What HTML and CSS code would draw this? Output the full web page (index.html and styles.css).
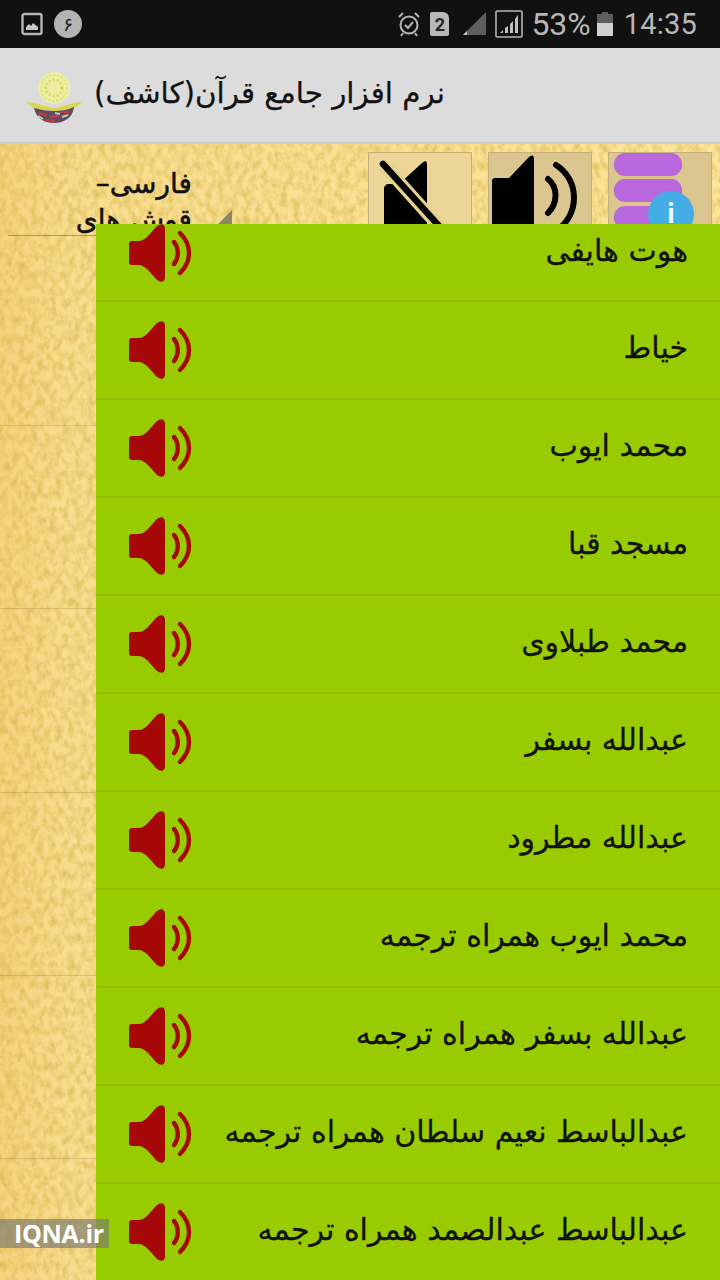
FILE: index.html
```html
<!DOCTYPE html>
<html lang="fa">
<head>
<meta charset="utf-8">
<title>کاشف</title>
<link rel="stylesheet" href="styles.css">
</head>
<body>
<svg class="defs" width="0" height="0" aria-hidden="true">
  <symbol id="spk" viewBox="0 0 64 60">
    <path d="M1 21 C1 19 2 18 4 18 L10 18 C14 18 17 16 20 13 L28 4 C32 0 37 0 37 6 L37 54 C37 60 32 60 28 56 L20 47 C17 44 14 42 10 42 L4 42 C2 42 1 41 1 39 Z" fill="#a60808"/>
    <path d="M46 19 C51 25 51 35 46 41" fill="none" stroke="#a60808" stroke-width="4.4" stroke-linecap="round"/>
    <path d="M52 10 C64 22 64 38 52 50" fill="none" stroke="#a60808" stroke-width="4.4" stroke-linecap="round"/>
  </symbol>
  <filter id="paperNoise" x="0" y="0" width="100%" height="100%">
    <feTurbulence type="fractalNoise" baseFrequency="0.16 0.11" numOctaves="4" seed="7"/>
    <feColorMatrix type="matrix" values="0 0 0 0 0.66  0 0 0 0 0.44  0 0 0 0 0.06  1.3 0 0 0 -0.48"/>
  </filter>
</svg>
<div class="screen">
  <header class="status">
    <div class="status-left">
      <svg class="ic-pic" width="22" height="24" viewBox="0 0 22 24"><rect x="1.5" y="2" width="19" height="20" rx="2" fill="none" stroke="#b5b5b5" stroke-width="2.4"/><path d="M5 18 L5 15 L8 12 L10 14 L12 11 L17 15 L17 18 Z" fill="#c8c8c8"/></svg>
      <span class="badge">۶</span>
    </div>
    <div class="status-right">
      <svg width="24" height="26" viewBox="0 0 24 26"><circle cx="12" cy="14" r="8.5" fill="none" stroke="#b5b5b5" stroke-width="2"/><path d="M8 14 L11 17 L16 11" fill="none" stroke="#b5b5b5" stroke-width="2"/><path d="M2 6 L6 2 M22 6 L18 2 M6 22 L4 25 M18 22 L20 25" stroke="#b5b5b5" stroke-width="2"/></svg>
      <span class="sim">2</span>
      <svg class="sig1" width="26" height="26" viewBox="0 0 26 26"><path d="M25 1 L25 24 L2 24 Z" fill="#5e5e5e"/><path d="M2 24 L6 20 L6 24 Z" fill="#c8c8c8"/></svg>
      <svg class="sig2" width="28" height="28" viewBox="0 0 28 28"><rect x="1" y="1" width="26" height="26" rx="1" fill="none" stroke="#b5b5b5" stroke-width="1.6"/><path d="M5 23 L8 23 L8 20 Z M10 23 L13 23 L13 16 L10 18 Z M15 23 L18 23 L18 11 L15 14 Z M20 23 L23 23 L23 5 L20 9 Z" fill="#c0c0c0"/></svg>
      <span class="pct">53%</span>
      <svg class="batt" width="16" height="24" viewBox="0 0 16 24"><path d="M5 0 L11 0 L11 2 L16 2 L16 24 L0 24 L0 2 L5 2 Z" fill="#5e5e5e"/><rect y="11" width="16" height="13" fill="#d0d0d0"/></svg>
      <span class="time">14:35</span>
    </div>
  </header>

  <div class="appbar">
    <svg class="logo" width="58" height="56" viewBox="0 0 58 56">
      <circle cx="29" cy="18" r="16" fill="#ecedA0"/>
      <circle cx="29" cy="18" r="13" fill="none" stroke="#dcdf70" stroke-width="1.5" stroke-dasharray="2 2"/>
      <circle cx="29" cy="18" r="8" fill="none" stroke="#d8dc66" stroke-width="3" stroke-dasharray="2 2"/>
      <path d="M1 32 C12 33 18 36 29 38 C40 36 46 33 57 32 L50 38 C48 41 46 40 29 41 C12 40 10 41 8 38 Z" fill="#d7d84e"/>
      <path d="M9 38 C16 40 22 41 29 41 C36 41 42 40 49 37 C48 47 40 53 29 53 C18 53 11 47 9 38 Z" fill="#5f4a62"/>
      <path d="M14 43 L22 45 M25 47 L34 46 M36 42 L44 42 M20 50 L30 51" stroke="#c23a3a" stroke-width="2.6"/>
      <path d="M13 46 L18 49 M30 43 L35 44 M37 47 L43 45" stroke="#c9c9b0" stroke-width="2"/>
    </svg>
    <h1 class="apptitle" dir="rtl">نرم افزار جامع قرآن(کاشف)</h1>
  </div>

  <main class="content">
    <svg class="paper" width="720" height="1136" aria-hidden="true"><rect width="720" height="1136" filter="url(#paperNoise)"/></svg>
    <div class="topline">
      <div class="lang" dir="rtl">
        <div>فارسی–</div>
        <div>قوش های</div>
        <span class="caret"></span>
      </div>
      <div class="tools">
        <div class="tool tool-pale">
          <svg width="104" height="80" viewBox="0 0 104 80"><path d="M15 36 C15 33 17 31 20 31 L30 31 L53 10 C57 7 58 8 58 12 L58 80 L15 80 Z" fill="#000"/><path d="M14 11 L76 80" stroke="#e8d08e" stroke-width="13"/><path d="M14 11 L80 84" stroke="#000" stroke-width="6.5" stroke-linecap="round"/></svg>
        </div>
        <div class="tool">
          <svg width="104" height="80" viewBox="0 0 104 80"><path d="M3 28 C3 26 4 25 6 25 L20 25 L39 5 C43 1 45 2 45 6 L45 80 L3 80 Z" fill="#000"/><path d="M59 26 C69 34 69 50 59 60" fill="none" stroke="#000" stroke-width="6" stroke-linecap="round"/><path d="M67 12 C91 27 91 62 67 78" fill="none" stroke="#000" stroke-width="6" stroke-linecap="round"/></svg>
        </div>
        <div class="tool tool-db">
          <span class="pill"></span><span class="pill"></span><span class="pill"></span>
          <span class="info">i</span>
        </div>
      </div>
    </div>
    <div class="side">
      <div class="side-row side-a"></div>
      <div class="side-row"></div>
      <div class="side-row"></div>
      <div class="side-row"></div>
      <div class="side-row"></div>
      <div class="side-row"></div>
    </div>

    <div class="sheet">
      <div class="row row-first"><svg class="spk"><use href="#spk"/></svg><span class="name" dir="rtl">هوت هایفی</span></div>
      <div class="row"><svg class="spk"><use href="#spk"/></svg><span class="name" dir="rtl">خیاط</span></div>
      <div class="row"><svg class="spk"><use href="#spk"/></svg><span class="name" dir="rtl">محمد ایوب</span></div>
      <div class="row"><svg class="spk"><use href="#spk"/></svg><span class="name" dir="rtl">مسجد قبا</span></div>
      <div class="row"><svg class="spk"><use href="#spk"/></svg><span class="name" dir="rtl">محمد طبلاوی</span></div>
      <div class="row"><svg class="spk"><use href="#spk"/></svg><span class="name" dir="rtl">عبدالله بسفر</span></div>
      <div class="row"><svg class="spk"><use href="#spk"/></svg><span class="name" dir="rtl">عبدالله مطرود</span></div>
      <div class="row"><svg class="spk"><use href="#spk"/></svg><span class="name" dir="rtl">محمد ایوب همراه ترجمه</span></div>
      <div class="row"><svg class="spk"><use href="#spk"/></svg><span class="name" dir="rtl">عبدالله بسفر همراه ترجمه</span></div>
      <div class="row"><svg class="spk"><use href="#spk"/></svg><span class="name" dir="rtl">عبدالباسط نعیم سلطان همراه ترجمه</span></div>
      <div class="row"><svg class="spk"><use href="#spk"/></svg><span class="name" dir="rtl">عبدالباسط عبدالصمد همراه ترجمه</span></div>
    </div>
    <div class="watermark">IQNA.ir</div>
  </main>
</div>
</body>
</html>
```
FILE: styles.css
```css
* { box-sizing: border-box; }
html, body { margin: 0; padding: 0; }
body { width: 720px; height: 1280px; overflow: hidden; font-family: "DejaVu Sans", "Noto Sans", sans-serif; }
.defs { position: absolute; }
.screen { width: 720px; height: 1280px; display: flex; flex-direction: column; overflow: hidden; }

.status { height: 48px; flex: none; background: #111112; display: flex; justify-content: space-between; align-items: center; padding: 0 23px 0 21px; color: #b8b8b8; font-family: Roboto, "Noto Sans", sans-serif; }
.status-left { display: flex; align-items: center; gap: 11px; }
.status-right { display: flex; align-items: center; }
.badge { width: 28px; height: 28px; border-radius: 50%; background: #b3b3b3; color: #222; font-size: 19px; line-height: 28px; text-align: center; font-family: "DejaVu Sans", sans-serif; }
.sim { width: 19px; height: 24px; margin-left: 9px; background: #b8b8b8; color: #222; font-size: 18px; font-weight: 700; line-height: 25px; text-align: center; border-radius: 2px 6px 2px 2px; }
.sig1 { margin-left: 12px; }
.sig2 { margin-left: 8px; }
.pct { font-size: 32px; margin-left: 8px; letter-spacing: 0; }
.batt { margin-left: 6px; }
.time { font-size: 29px; margin-left: 11px; letter-spacing: 0.2px; }

.appbar { height: 96px; flex: none; background: #dcdcdd; border-bottom: 2px solid #cfcdc6; display: flex; align-items: center; padding: 6px 0 0 25px; gap: 11px; }
.logo { flex: none; }
.apptitle { margin: 0 0 8px; font-size: 29.4px; font-weight: 400; color: #111; white-space: nowrap; line-height: 1.2; -webkit-text-stroke: .25px #111; }

.content { flex: 1; position: relative; overflow: hidden; display: flex; flex-direction: column;
  background: linear-gradient(90deg, #f6d37f 0, #f9dd8f 70px, #fae093 300px, #fde59c 100%); }
.paper { position: absolute; left: 0; top: 0; }

.topline { display: flex; height: 96px; flex: none; position: relative; }
.lang { position: absolute; left: 60px; top: 22px; width: 132px; font-size: 28px; line-height: 36px; color: #111; font-weight: 400; text-align: right; -webkit-text-stroke: .5px #111; white-space: nowrap; }
.caret { position: absolute; left: 158px; top: 44px; width: 0; height: 0; border-left: 14px solid transparent; border-bottom: 14px solid #8f8667; }
.tools { position: absolute; left: 368px; top: 8px; display: flex; gap: 16px; }
.tool { width: 104px; height: 88px; background: #dcc68f; border: 1px solid #c4b07a; overflow: hidden; position: relative; }
.tool svg { display: block; }
.tool-pale { background: #ecd596; }
.tool-db { background: #dcc68f; }
.pill { position: absolute; left: 5px; width: 68px; height: 23px; border-radius: 11px; background: #b868dc; }
.pill:nth-child(1) { top: 0; }
.pill:nth-child(2) { top: 26px; }
.pill:nth-child(3) { top: 53px; }
.info { position: absolute; left: 39px; top: 38px; width: 46px; height: 46px; border-radius: 50%; background: #45ade6; color: #e8fbff; font-size: 28px; font-weight: 700; line-height: 46px; text-align: center; font-family: Roboto, sans-serif; }

.side { position: absolute; left: 0; top: 91px; width: 96px; }
.side-row { height: 183.3px; border-bottom: 1px solid rgba(120,90,40,.22); }
.side-a { height: 0; margin-left: 8px; border-bottom-color: rgba(90,80,50,.45); }
.side-row:nth-child(2) { height: 190px; }

.sheet { position: absolute; left: 96px; top: 80px; right: 0; bottom: 0; background: #99cc00; overflow: hidden; }
.row { height: 98px; display: flex; align-items: center; justify-content: space-between; padding: 0 32px 0 32px; border-bottom: 2px solid #8ebd00; }
.row-first { height: 78px; padding-bottom: 18px; }
.spk { width: 64px; height: 60px; flex: none; }
.name { font-size: 30px; color: #111; white-space: nowrap; line-height: 40px; margin-top: -4px; -webkit-text-stroke: .3px #111; }

.watermark { position: absolute; left: 0; bottom: 32px; width: 109px; height: 29px; padding-left: 14px; background: rgba(120,120,110,.65); color: #fff; font: 700 25px/29px "Open Sans", Roboto, sans-serif; letter-spacing: -0.3px; }
```
